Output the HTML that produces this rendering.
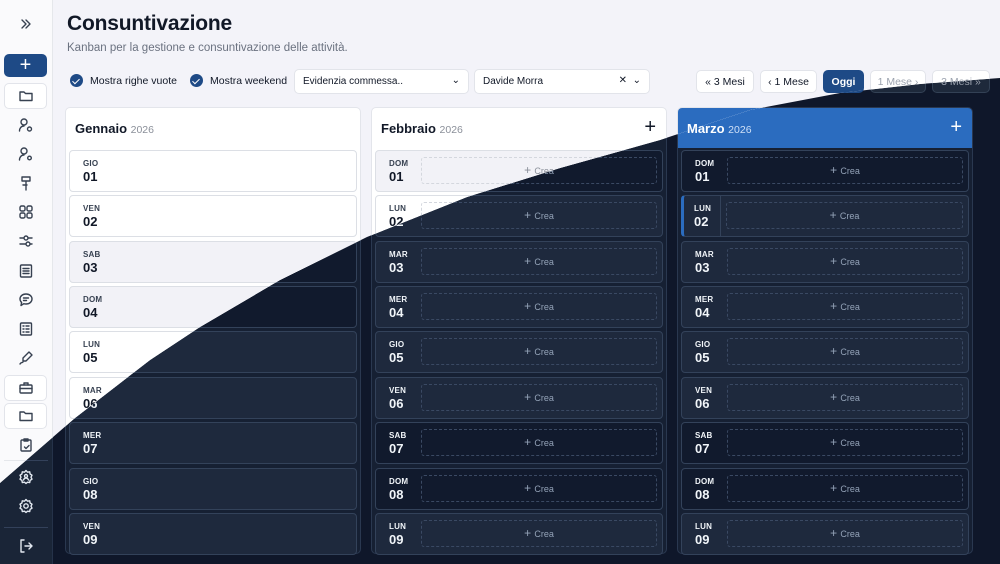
<!DOCTYPE html>
<html><head><meta charset="utf-8"><style>
*{box-sizing:border-box;margin:0;padding:0}
body{width:1000px;height:564px;overflow:hidden;font-family:"Liberation Sans",sans-serif;position:relative}
.layer{position:absolute;left:0;top:0;width:1000px;height:564px;overflow:hidden}
.L{background:#f3f3f9;color:#111827;clip-path:polygon(0 0,1000px 0,1000px 78px,920px 84px,840px 93px,750px 110px,660px 140px,560px 168px,467px 197px,367px 237px,280px 280px,200px 327px,150px 360px,75px 418px,0 483px)}
.D{background:#0f172a;color:#f1f5f9}
.sb{position:absolute;left:0;top:0;width:53px;height:564px;border-right:1px solid #e5e7eb}
.L .sb{background:#fafafc}
.D .sb{background:#1a2537;border-right-color:#253249}
.sb svg{position:absolute;left:18px;width:16px;height:16px;fill:none;stroke-width:1.4;stroke-linecap:round;stroke-linejoin:round}
.L .sb svg{stroke:#374151}.D .sb svg{stroke:#e2e8f0}
.plus{position:absolute;left:4px;top:54px;width:43px;height:23px;border-radius:5px;background:#1e4a86;color:#fff;text-align:center;font-size:20px;line-height:22px}
.box{position:absolute;left:4px;width:43px;height:26px;border-radius:5px;border:1px solid #e2e4ea}
.L .box{background:#fff}.D .box{border-color:#2c3a52;background:#1e2a3e}
.sep{position:absolute;left:4px;width:44px;height:1px}
.L .sep{background:#e5e7eb}.D .sep{background:#33415a}
h1{position:absolute;left:67px;top:12px;font-size:21px;font-weight:700;letter-spacing:-.2px}
.sub{position:absolute;left:67px;top:42px;font-size:11.5px}
.L .sub{color:#6b7280}.D .sub{color:#94a3b8}
.chk{position:absolute;top:74px;font-size:10.5px;display:flex;align-items:center;gap:7px}
.chk i{width:13px;height:13px;border-radius:50%;background:#1e4a86;display:inline-block;position:relative}
.chk i:after{content:"";position:absolute;left:4px;top:2.5px;width:3px;height:6px;border:solid #fff;border-width:0 1.6px 1.6px 0;transform:rotate(45deg)}
.sel{position:absolute;top:69px;height:25px;border-radius:5px;font-size:10px;padding:6px 8px;border:1px solid #e2e4ea}
.L .sel{background:#fff}.D .sel{background:#1e293b;border-color:#334155}
.sel b{position:absolute;right:8px;top:5px;font-weight:400;font-size:10px}
.btn{position:absolute;top:70px;height:23px;border-radius:5px;font-size:10.5px;text-align:center;line-height:22px;border:1px solid #e2e4ea}
.L .btn{background:#fff}.D .btn{background:#1e293b;border-color:#334155}
.btn.dis{color:#9ca3af}
.btn.on{background:#1e4a86!important;color:#fff;border-color:#1e4a86!important;font-weight:700}
.col{position:absolute;top:107px;width:296px;height:447px;border-radius:5px;border:1px solid #e3e5eb}
.L .col{background:#fff}.D .col{background:#162033;border-color:#2a3850}
.hd{position:absolute;left:0;top:0;right:0;height:40px;padding:13px 9px;font-size:13px;font-weight:700}
.hd span{font-size:10.5px;font-weight:400;color:#8a8f99}
.hd em{position:absolute;right:10px;top:8px;font-style:normal;font-weight:300;font-size:20px}
.col.cur .hd{background:#2b6cbf;color:#fff;border-radius:4px 4px 0 0}
.col.cur .hd span{color:#cfe0f7}
.r{position:absolute;left:3px;right:3px;height:42px;border-radius:4px;border:1px solid #dcdfe5}
.L .r{background:#fff}.L .r.we{background:#f2f2f7}
.D .r{background:#1e293d;border-color:#33425a}.D .r.we{background:#111a2d}
.dt{position:absolute;left:13px;top:9px;line-height:1}
.dt s{display:block;text-decoration:none;font-size:8px;font-weight:700;letter-spacing:.2px}
.dt u{display:block;text-decoration:none;font-size:13px;font-weight:700;margin-top:2px}
.L .dt s{color:#374151}
.cr{position:absolute;left:45px;right:5px;top:6px;height:27px;border:1px dashed #d4d7de;border-radius:3px;text-align:center;font-size:9px;line-height:25px}
.L .cr{color:#8a8f99}.D .cr{border-color:#3a4963;color:#94a3b8}
.cr:before{content:"+ ";font-size:12px}
.r.today{border-left:3px solid #2b6cbf}
.r.today .cr{left:42px}
.r.today:after{content:"";position:absolute;left:36px;top:0;bottom:0;width:1px;background:#33425a}
</style></head><body>

<!-- DARK LAYER -->
<div class="layer D" id="d"></div>
<!-- LIGHT LAYER -->
<div class="layer L" id="l">
<div class="sb">
<svg style="top:16px" viewBox="0 0 16 16"><path d="M4 4l4 4-4 4M8 4l4 4-4 4"/></svg>
<div class="plus">+</div>
<div class="box" style="top:83px"></div>
<svg style="top:88px" viewBox="0 0 16 16"><path d="M2 4h4l1.5 1.5H14v7H2z"/></svg>
<svg style="top:117px" viewBox="0 0 16 16"><circle cx="6" cy="5" r="3"/><path d="M1.5 14c0-3 2-5 4.5-5"/><circle cx="11.5" cy="12" r="2"/></svg>
<svg style="top:146px" viewBox="0 0 16 16"><circle cx="6" cy="5" r="3"/><path d="M1.5 14c0-3 2-5 4.5-5"/><circle cx="11.5" cy="12" r="1.8"/></svg>
<svg style="top:175px" viewBox="0 0 16 16"><path d="M4 2h8v4H4zM8 6v9M5 10h4"/></svg>
<svg style="top:204px" viewBox="0 0 16 16"><rect x="2" y="2" width="5" height="5" rx="1.5"/><rect x="9" y="2" width="5" height="5" rx="1.5"/><rect x="2" y="9" width="5" height="5" rx="1.5"/><rect x="9" y="9" width="5" height="5" rx="1.5"/></svg>
<svg style="top:233px" viewBox="0 0 16 16"><path d="M2 5h4M10 5h4M2 11h6M12 11h2"/><circle cx="8" cy="5" r="2"/><circle cx="10" cy="11" r="2"/></svg>
<svg style="top:263px" viewBox="0 0 16 16"><rect x="2.5" y="2" width="11" height="12" rx="1"/><path d="M5 5.5h6M5 8h6M5 10.5h6"/></svg>
<svg style="top:292px" viewBox="0 0 16 16"><path d="M8 2c3.5 0 6 2.2 6 5s-2.5 5-6 5c-.8 0-1.5-.1-2.2-.3L3 13.5l.6-3C2.6 9.5 2 8.3 2 7c0-2.8 2.5-5 6-5zM5.5 6h5M5.5 8.5h3"/></svg>
<svg style="top:321px" viewBox="0 0 16 16"><rect x="2.5" y="2" width="11" height="12" rx="1"/><path d="M5 5h1M8 5h3M5 8h1M8 8h3M5 11h1M8 11h3"/></svg>
<svg style="top:350px" viewBox="0 0 16 16"><path d="M11 2l3 3-6 6H5V8zM2 14c1-2 2-1 3-2"/></svg>
<div class="box" style="top:375px"></div>
<svg style="top:380px" viewBox="0 0 16 16"><rect x="2" y="5" width="12" height="8" rx="1"/><path d="M6 5V3h4v2M2 8.5h12"/></svg>
<div class="box" style="top:403px"></div>
<svg style="top:408px" viewBox="0 0 16 16"><path d="M2 4h4l1.5 1.5H14v7H2z"/></svg>
<svg style="top:437px" viewBox="0 0 16 16"><rect x="3" y="3" width="10" height="11" rx="1"/><path d="M6 2h4v2H6zM6.5 10l1.5 1.5 3-3"/></svg>
<div class="sep" style="top:460px"></div>
<svg style="top:469px" viewBox="0 0 16 16"><path d="M8 1.5l1.5 1.7 2.2-.4.4 2.2 1.9 1.2-1 2 1 2-1.9 1.2-.4 2.2-2.2-.4L8 14.5l-1.5-1.3-2.2.4-.4-2.2-1.9-1.2 1-2-1-2 1.9-1.2.4-2.2 2.2.4z"/><circle cx="8" cy="7" r="1.5"/><path d="M5.5 11c.5-1.3 1.5-2 2.5-2s2 .7 2.5 2"/></svg>
<svg style="top:498px" viewBox="0 0 16 16"><path d="M8 1.5l1.5 1.7 2.2-.4.4 2.2 1.9 1.2-1 2 1 2-1.9 1.2-.4 2.2-2.2-.4L8 14.5l-1.5-1.3-2.2.4-.4-2.2-1.9-1.2 1-2-1-2 1.9-1.2.4-2.2 2.2.4z"/><circle cx="8" cy="8" r="2.2"/></svg>
<div class="sep" style="top:527px"></div>
<svg style="top:538px" viewBox="0 0 16 16"><path d="M6 2H3v12h3M7 8h7M11 5l3 3-3 3"/></svg>
</div>
<h1>Consuntivazione</h1>
<div class="sub">Kanban per la gestione e consuntivazione delle attività.</div>
<div class="chk" style="left:70px"><i></i>Mostra righe vuote</div>
<div class="chk" style="left:190px"><i></i>Mostra weekend</div>
<div class="sel" style="left:294px;width:175px">Evidenzia commessa..<b>⌄</b></div>
<div class="sel" style="left:474px;width:176px">Davide Morra<b>✕ &nbsp;⌄</b></div>
<div class="btn" style="left:696px;width:58px">« 3 Mesi</div>
<div class="btn" style="left:760px;width:57px">‹ 1 Mese</div>
<div class="btn on" style="left:823px;width:41px">Oggi</div>
<div class="btn dis" style="left:870px;width:56px">1 Mese ›</div>
<div class="btn dis" style="left:932px;width:58px">3 Mesi »</div>

<div class="col" style="left:65px"><div class="hd">Gennaio <span>2026</span></div>
<div class="r" style="top:42px"><div class="dt"><s>GIO</s><u>01</u></div></div>
<div class="r" style="top:87px"><div class="dt"><s>VEN</s><u>02</u></div></div>
<div class="r we" style="top:133px"><div class="dt"><s>SAB</s><u>03</u></div></div>
<div class="r we" style="top:178px"><div class="dt"><s>DOM</s><u>04</u></div></div>
<div class="r" style="top:223px"><div class="dt"><s>LUN</s><u>05</u></div></div>
<div class="r" style="top:269px"><div class="dt"><s>MAR</s><u>06</u></div></div>
<div class="r" style="top:314px"><div class="dt"><s>MER</s><u>07</u></div></div>
<div class="r" style="top:360px"><div class="dt"><s>GIO</s><u>08</u></div></div>
<div class="r" style="top:405px"><div class="dt"><s>VEN</s><u>09</u></div></div>
</div>

<div class="col" style="left:371px"><div class="hd">Febbraio <span>2026</span><em>+</em></div>
<div class="r we" style="top:42px"><div class="dt"><s>DOM</s><u>01</u></div><div class="cr">Crea</div></div>
<div class="r" style="top:87px"><div class="dt"><s>LUN</s><u>02</u></div><div class="cr">Crea</div></div>
<div class="r" style="top:133px"><div class="dt"><s>MAR</s><u>03</u></div><div class="cr">Crea</div></div>
<div class="r" style="top:178px"><div class="dt"><s>MER</s><u>04</u></div><div class="cr">Crea</div></div>
<div class="r" style="top:223px"><div class="dt"><s>GIO</s><u>05</u></div><div class="cr">Crea</div></div>
<div class="r" style="top:269px"><div class="dt"><s>VEN</s><u>06</u></div><div class="cr">Crea</div></div>
<div class="r we" style="top:314px"><div class="dt"><s>SAB</s><u>07</u></div><div class="cr">Crea</div></div>
<div class="r we" style="top:360px"><div class="dt"><s>DOM</s><u>08</u></div><div class="cr">Crea</div></div>
<div class="r" style="top:405px"><div class="dt"><s>LUN</s><u>09</u></div><div class="cr">Crea</div></div>
</div>

<div class="col cur" style="left:677px"><div class="hd">Marzo <span>2026</span><em>+</em></div>
<div class="r we" style="top:42px"><div class="dt"><s>DOM</s><u>01</u></div><div class="cr">Crea</div></div>
<div class="r today" style="top:87px"><div class="dt" style="left:10px"><s>LUN</s><u>02</u></div><div class="cr">Crea</div></div>
<div class="r" style="top:133px"><div class="dt"><s>MAR</s><u>03</u></div><div class="cr">Crea</div></div>
<div class="r" style="top:178px"><div class="dt"><s>MER</s><u>04</u></div><div class="cr">Crea</div></div>
<div class="r" style="top:223px"><div class="dt"><s>GIO</s><u>05</u></div><div class="cr">Crea</div></div>
<div class="r" style="top:269px"><div class="dt"><s>VEN</s><u>06</u></div><div class="cr">Crea</div></div>
<div class="r we" style="top:314px"><div class="dt"><s>SAB</s><u>07</u></div><div class="cr">Crea</div></div>
<div class="r we" style="top:360px"><div class="dt"><s>DOM</s><u>08</u></div><div class="cr">Crea</div></div>
<div class="r" style="top:405px"><div class="dt"><s>LUN</s><u>09</u></div><div class="cr">Crea</div></div>
</div>
</div>
<script>document.getElementById('d').innerHTML=document.getElementById('l').innerHTML;</script>
</body></html>
